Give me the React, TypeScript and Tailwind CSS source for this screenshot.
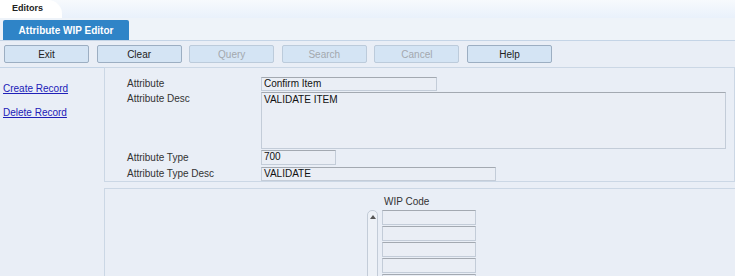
import React from "react";

const buttons = [
  { label: "Exit", disabled: false },
  { label: "Clear", disabled: false },
  { label: "Query", disabled: true },
  { label: "Search", disabled: true },
  { label: "Cancel", disabled: true },
  { label: "Help", disabled: false },
];

function Field({ value, className }: { value: string; className: string }) {
  return (
    <div
      className={
        "border border-[#c3ccd8] border-t-[#a3a9b1] bg-[#eaeef5] px-[2px] text-[10px] leading-[12px] text-[#111] " +
        className
      }
    >
      {value}
    </div>
  );
}

export default function App() {
  return (
    <div
      className="w-[735px] h-[276px] overflow-hidden bg-[#e9eef6] text-[#333]"
      style={{ fontFamily: '"Liberation Sans", Arial, sans-serif' }}
    >
      {/* header strip */}
      <div className="h-[18px] bg-gradient-to-b from-[#f7fafd] to-[#e9f1fb] flex">
        <div className="w-[62px] h-[18px] bg-white rounded-tr-[14px] pl-[12px] flex items-center text-[9px] font-bold text-[#222]">
          Editors
        </div>
      </div>

      {/* tab row */}
      <div className="h-[22px] pt-[2px] pl-[3px] bg-[#eef3f9]">
        <div className="w-[126px] h-[20px] bg-[#2f84c7] rounded-t-[2px] flex items-center justify-center text-white text-[10px] font-bold">
          Attribute WIP Editor
        </div>
      </div>

      {/* toolbar */}
      <div className="h-[28px] border-t border-b border-[#c4d4e6] flex items-center gap-[7.6px] pl-[4px]">
        {buttons.map((b) => (
          <div
            key={b.label}
            className={
              "w-[85px] h-[18px] rounded-[2px] border bg-[#d4e4f4] flex items-center justify-center text-[10px] " +
              (b.disabled
                ? "border-[#bccbdb] text-[#a3a8ae]"
                : "border-[#9caec2] text-[#222]")
            }
          >
            {b.label}
          </div>
        ))}
      </div>

      <div className="flex h-[208px]">
        {/* sidebar */}
        <div className="w-[104px] pl-[3px] pt-[15px] flex flex-col gap-[12px] text-[10px]">
          <span className="text-[#2020b8] underline leading-[12px]">Create Record</span>
          <span className="text-[#2020b8] underline leading-[12px]">Delete Record</span>
        </div>

        <div className="flex-1 flex flex-col gap-[6px] -mt-px">
          {/* form panel */}
          <div className="h-[116px] border border-[#cbd7e5] pl-[22px] pt-[8px] flex flex-col gap-px">
            <div className="flex items-center">
              <div className="w-[134px] text-[10px]">Attribute</div>
              <Field value="Confirm Item" className="w-[176px] h-[14px]" />
            </div>
            <div className="flex">
              <div className="w-[134px] text-[10px] leading-[12px] pt-px">Attribute Desc</div>
              <Field value="VALIDATE ITEM" className="w-[465px] h-[57px] pt-[1px]" />
            </div>
            <div className="flex items-center">
              <div className="w-[134px] text-[10px]">Attribute Type</div>
              <Field value="700" className="w-[75px] h-[15px]" />
            </div>
            <div className="flex items-center">
              <div className="w-[134px] text-[10px]">Attribute Type Desc</div>
              <Field value="VALIDATE" className="w-[235px] h-[14px]" />
            </div>
          </div>

          {/* WIP code panel */}
          <div className="flex-1 border-l border-t border-[#cbd7e5] pl-[262px] pt-[6px]">
            <div className="pl-[17px] text-[10px] leading-[13px] text-[#333]">WIP Code</div>
            <div className="flex gap-[4px] mt-[2px]">
              <div className="w-[11px] h-[80px] border border-[#c3ccd8] rounded-t-[5px] bg-[#edf1f7] flex justify-center pt-[4px]">
                <svg width="6" height="4" viewBox="0 0 6 4">
                  <path d="M0 4 L3 0 L6 4 Z" fill="#555" />
                </svg>
              </div>
              <div className="flex flex-col gap-px">
                {[0, 1, 2, 3, 4].map((i) => (
                  <div
                    key={i}
                    className="w-[94px] h-[15px] border border-[#c3ccd8] border-t-[#a3a9b1] bg-[#eaeef5]"
                  />
                ))}
              </div>
            </div>
          </div>
        </div>
      </div>
    </div>
  );
}
